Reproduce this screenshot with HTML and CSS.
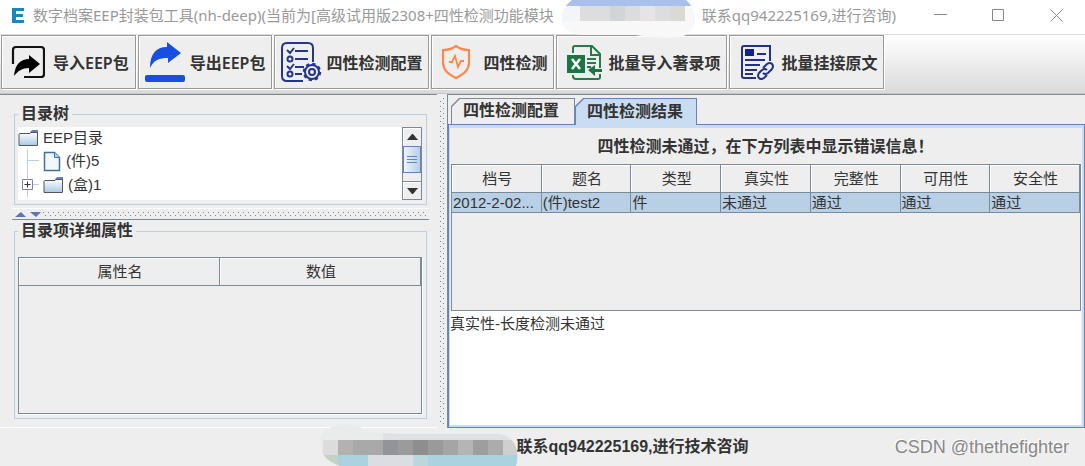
FILE: index.html
```html
<!DOCTYPE html>
<html lang="zh-CN">
<head>
  <meta charset="UTF-8">
  <meta name="viewport" content="width=device-width, initial-scale=1.0">
  <title>数字档案EEP封装包工具</title>
  <link rel="stylesheet" href="styles.css">
</head>
<body>
  <!-- 标题栏 -->
  <header class="titlebar">
    <svg class="app-icon" width="12" height="15" viewBox="0 0 12 15"><path d="M0 0h12v3H4v3h7v3H4v3h8v3H0z" fill="#1c86bd"/></svg>
    <span>数字档案EEP封装包工具(nh-deep)(当前为[高级试用版2308+四性检测功能模块</span>
    <svg class="title-mask" width="136" height="38" viewBox="0 0 136 38">
      <clipPath id="mask-top"><path d="M12 0h114c14 12 12 33-6 37-18 2-32 0-44-2H22C0 33-6 14 12 0z"/></clipPath>
      <g clip-path="url(#mask-top)">
        <rect width="136" height="38" fill="#f8f8f9"/>
        <rect width="136" height="6" fill="#a9c0ea"/>
        <rect y="6" width="20" height="15" fill="#f4f5f9"/>
        <rect x="20" y="6" width="30" height="15" fill="#dedddd"/>
        <rect x="50" y="6" width="15" height="15" fill="#d2d4d8"/>
        <rect x="65" y="6" width="15" height="15" fill="#dddcdd"/>
        <rect x="80" y="6" width="15" height="15" fill="#e6e4e4"/>
        <rect x="95" y="6" width="15" height="15" fill="#dddddd"/>
        <rect x="110" y="6" width="15" height="15" fill="#dbd9d6"/>
      </g>
    </svg>
    <span>联系qq942225169,进行咨询)</span>
    <div class="window-buttons">
      <button aria-label="最小化"><svg width="13" height="13" viewBox="0 0 13 13"><path d="M0 5.500h13"/></svg></button>
      <button aria-label="最大化"><svg width="13" height="13" viewBox="0 0 13 13"><path d="M.5.5h11v11H.5z"/></svg></button>
      <button aria-label="关闭"><svg width="13" height="13" viewBox="0 0 13 13"><path d="M.5.5l12 12M12.500.5l-12 12"/></svg></button>
    </div>
  </header>

  <!-- 工具栏 -->
  <nav class="toolbar">
    <button>
      <svg width="34" height="34" viewBox="0 0 34 34"><path d="M2 19V5q0-3 3-3h25q3 0 3 3v24q0 3-3 3H13" fill="none" stroke="#111" stroke-width="2.200"/><path d="M3 31C4 19 10 14 18 14v-4l11 9-11 9v-5C11 23 7 26 3 31z" fill="#000"/></svg>
      导入EEP包
    </button>
    <button>
      <svg width="42" height="42" viewBox="0 0 42 42"><path d="M6 27C6 13 12 6 23 6V1l14 11-13 10v-5c-9 0-14 2-18 10z" fill="#1a4ee0"/><rect x="1" y="34" width="40" height="7" rx="2" fill="#1a4ee0"/></svg>
      导出EEP包
    </button>
    <button>
      <svg width="42" height="42" viewBox="0 0 42 42" fill="none" stroke="#26358c" stroke-width="2"><path d="M23 40H7q-5 0-5-5V7q0-5 5-5h21q5 0 5 5v14" /><path d="M15 10h13M15 18h13M15 26h9M15 33h7M7 9l3 3 4-5M7 25l3 3 4-5"/><circle cx="10" cy="18" r="2.500"/><circle cx="10" cy="33" r="2.500"/><circle cx="32" cy="31" r="7" fill="#eee"/><circle cx="32" cy="31" r="8" stroke-width="2.500" stroke-dasharray="3.200 3.083"/><circle cx="32" cy="31" r="3"/></svg>
      四性检测配置
    </button>
    <button>
      <svg width="34" height="36" viewBox="6 0 34 36" fill="none" stroke="#ff8747" stroke-width="2.200"><path d="M21 2c4 3 8 4 13 4v12c0 8-5 12-13 16C13 30 8 26 8 18V6c5 0 9-1 13-4z"/><path d="M14 18h3l3-6 3 11 3-6h3" stroke-width="1.800"/></svg>
      四性检测
    </button>
    <button>
      <svg width="36" height="36" viewBox="0 0 36 36"><path d="M7 9V4q0-2 2-2h17l8 8v14M7 31v1q0 3 3 3h22q2 0 2-2v-3M25 2v9h9M21 15h9M21 19h9M21 23h4" fill="none" stroke="#237c4a" stroke-width="2"/><path d="M1 11h18v18H1z" fill="#1d7544"/><path d="M6 15l8 10M14 15L6 25" stroke="#fff" stroke-width="2.500"/><path d="M22 26l7-5v4h7v3h-7v4z" fill="#1d7544"/></svg>
      批量导入著录项
    </button>
    <button>
      <svg width="36" height="36" viewBox="0 0 36 36" fill="none" stroke="#22308c" stroke-width="2"><path d="M17 34H5q-2 0-2-2V4q0-2 2-2h26v15"/><path d="M6 5h9v7H6z" fill="#14218a" stroke="none"/><path d="M18 10h9M6 16h20M6 21h15M6 26h12M6 30h8"/><path d="M24 24l4-4q3-2 5 0t0 5l-4 4q-3 2-5 0M28 26q-2-2-5 0l-3 3q-2 3 0 5t5 0l3-3"/></svg>
      批量挂接原文
    </button>
  </nav>

  <main>
    <section class="left">
      <fieldset class="tree-box">
        <legend>目录树</legend>
        <div class="tree-row">
          <ul class="tree">
            <li>
              <svg width="21" height="17" viewBox="0 0 21 17"><use href="#folder"/></svg>EEP目录
            </li>
            <li class="child">
              <svg class="branch" width="23" height="24" viewBox="0 0 23 24"><path d="M9.500 0v24M10 11.500h11"/></svg>
              <svg class="doc" width="18" height="21" viewBox="0 0 18 21"><path d="M1.500 1.500h10l5 5v13h-15z" fill="#f2f7fc" stroke="#3f6fa5" stroke-width="1.500"/><path d="M11.500 1.500v5h5" fill="#b8cfe5" stroke="#3f6fa5"/></svg>(件)5
            </li>
            <li class="child">
              <svg class="branch" width="23" height="24" viewBox="0 0 23 24"><path d="M9.500 0v24M10 11.500h11"/><path class="handle" d="M4.500 6.500h10v10h-10z"/><path class="plus" d="M6.500 11.500h6M9.500 8.500v6"/></svg>
              <svg width="21" height="17" viewBox="0 0 21 17"><g id="folder"><path d="M12 2l2-2h6v3h-8z" fill="#6382bf"/><path d="M1 4.500q0-1 1-1h10l1-1h6.500v13H1z" fill="url(#folder-fill)" stroke="#555"/></g><linearGradient id="folder-fill" x2="0" y2="1"><stop stop-color="#fff"/><stop offset="1" stop-color="#a9c8e4"/></linearGradient></svg>(盒)1
            </li>
          </ul>
          <div class="scrollbar">
            <button aria-label="向上"><svg width="11" height="6" viewBox="0 0 11 6"><path d="M0 6l5-6h1l5 6z"/></svg></button>
            <div class="thumb"></div>
            <div class="track"></div>
            <button aria-label="向下"><svg width="11" height="6" viewBox="0 0 11 6"><path d="M0 0l5 6h1l5-6z"/></svg></button>
          </div>
        </div>
      </fieldset>

      <div class="splitter-h">
        <svg width="28" height="5" viewBox="0 0 28 5" fill="#5676b5"><path d="M0 5l6-5 5 5zM15 0h11l-5 5z"/></svg>
      </div>

      <fieldset class="detail-box">
        <legend>目录项详细属性</legend>
        <div class="table-wrap">
          <table>
            <thead><tr><th>属性名</th><th>数值</th></tr></thead>
          </table>
        </div>
      </fieldset>
    </section>

    <div class="splitter-v"></div>

    <section class="right">
      <div class="tabs">
        <button class="tab">四性检测配置</button>
        <button class="tab active">四性检测结果</button>
      </div>
      <div class="panel">
        <p class="message">四性检测未通过，在下方列表中显示错误信息！</p>
        <div class="table-wrap result">
          <table>
            <thead>
              <tr><th>档号</th><th>题名</th><th>类型</th><th>真实性</th><th>完整性</th><th>可用性</th><th>安全性</th></tr>
            </thead>
            <tbody>
              <tr><td>2012-2-02...</td><td>(件)test2</td><td>件</td><td>未通过</td><td>通过</td><td>通过</td><td>通过</td></tr>
            </tbody>
          </table>
        </div>
        <textarea aria-label="错误信息">真实性-长度检测未通过</textarea>
      </div>
    </section>
  </main>

  <!-- 底部 -->
  <footer>
    <div class="contact">
      <svg class="contact-mask" width="200" height="42" viewBox="0 0 200 42">
        <clipPath id="mask-bottom"><path d="M6 8C14-2 40-1 50 7c20 4 40 3 60 3h70c18 2 22 18 18 32H22C4 36-4 20 6 8z"/></clipPath>
        <g clip-path="url(#mask-bottom)">
          <rect width="200" height="42" fill="#eaebeb"/>
          <rect x="65" y="8" width="135" height="9" fill="#dfe1e3"/>
          <rect x="5" y="16" width="15" height="15" fill="#dcdcdc"/>
          <rect x="20" y="16" width="15" height="15" fill="#b3b1b1"/>
          <rect x="35" y="16" width="30" height="15" fill="#a9a9a9"/>
          <rect x="65" y="16" width="15" height="15" fill="#929499"/>
          <rect x="80" y="16" width="15" height="15" fill="#9b9b9b"/>
          <rect x="95" y="16" width="15" height="15" fill="#8e8e8e"/>
          <rect x="110" y="16" width="15" height="15" fill="#9a9a9a"/>
          <rect x="125" y="16" width="15" height="15" fill="#a5a5a5"/>
          <rect x="140" y="16" width="15" height="15" fill="#b5b5b5"/>
          <rect x="155" y="16" width="15" height="15" fill="#9e9e9e"/>
          <rect x="170" y="16" width="15" height="15" fill="#acacac"/>
          <rect x="185" y="16" width="15" height="15" fill="#cfcfd0"/>
          <rect y="31" width="20" height="11" fill="#c3d2c4"/>
          <rect x="20" y="31" width="30" height="11" fill="#a9d3de"/>
          <rect x="50" y="31" width="45" height="11" fill="#dcdde2"/>
          <rect x="95" y="31" width="15" height="11" fill="#bcd6de"/>
          <rect x="110" y="31" width="90" height="11" fill="#a9d3de"/>
        </g>
      </svg>
      <span>联系qq942225169,进行技术咨询</span>
    </div>
    <span class="watermark">CSDN @thethefighter</span>
  </footer>
</body>
</html>
```
FILE: styles.css
```css
* {
  box-sizing: border-box;
}
body {
  margin: 0;
  height: 100vh;
  display: flex;
  flex-direction: column;
  background-color: #eee;
  color: #333;
  font-family: "Liberation Sans", "Noto Sans CJK SC", sans-serif;
  font-size: 15px;
  overflow: hidden;
}
button {
  font: inherit;
  color: inherit;
  padding: 0;
  border: none;
  background: none;
}

/* 标题栏 */
.titlebar {
  display: flex;
  align-items: center;
  height: 34px;
  padding-left: 12px;
  background-color: #fff;
  color: #999;
  font-family: "Noto Sans", "Noto Sans CJK SC", sans-serif;
  line-height: 28px;
  white-space: nowrap;
}
.titlebar > span {
  height: 32px;
}
.app-icon {
  margin: 0 9px 4px 0;
}
.title-mask {
  position: relative;
  flex: none;
  align-self: flex-start;
  margin: 0 6px;
}
.window-buttons {
  display: flex;
  margin: 0 0 4px auto;
  height: 30px;
}
.window-buttons button {
  display: flex;
  align-items: center;
  justify-content: center;
  width: 58px;
}
.window-buttons path {
  fill: none;
  stroke: #888;
}

/* 工具栏 */
.toolbar {
  display: flex;
  gap: 2px;
  height: 60px;
  padding: 0 1px 4px;
  border-top: 1px solid #ddd;
  border-bottom: 1px solid #c8c8c8;
  background: linear-gradient(#fff, #dadada);
}
.toolbar button {
  display: flex;
  align-items: center;
  gap: 8px;
  height: 54px;
  padding: 0 6px 0 9px;
  border: 1px solid #999;
  box-shadow: inset 1px 1px #fff, 1px 1px #fff;
  background-color: #eee;
  font-family: "Noto Sans", "Noto Sans CJK SC", sans-serif;
  font-size: 16px;
  font-weight: 600;
  white-space: nowrap;
}
.toolbar button:nth-child(2),
.toolbar button:nth-child(3) {
  padding: 0 6px 0 5px;
  gap: 4px;
}
.toolbar button:nth-child(n+5) {
  gap: 6px;
}

/* 主体 */
main {
  flex: 1;
  display: flex;
  min-height: 0;
}
.left {
  display: flex;
  flex-direction: column;
  width: 437px;
  padding: 8px 8px 8px 12px;
  border-top: 1px solid #7a8a99;
  border-bottom: 1px solid #fff;
}
fieldset {
  display: flex;
  flex-direction: column;
  min-width: 0;
  margin: 0 2px;
  padding: 2px 4px 4px 3px;
  border: 1px solid #b8cfe5;
}
legend {
  padding: 0 3px;
  font-size: 16px;
  font-weight: bold;
  line-height: 22px;
}
.tree-row {
  display: flex;
  height: 73px;
}
.tree {
  flex: 1;
  margin: 0;
  padding: 0;
  overflow: hidden;
  background-color: #fff;
  list-style: none;
}
.tree li {
  display: flex;
  align-items: center;
  gap: 4px;
  height: 24px;
  line-height: 18px;
}
.tree li:first-child {
  height: 22px;
}
.tree .child svg + svg {
  margin-left: -2px;
}
.tree .doc {
  margin-right: 1px;
}
.branch path {
  fill: none;
  stroke: #b8cfe5;
}
.branch .handle {
  fill: #fff;
  stroke: #7a8a99;
}
.branch .plus {
  stroke: #333;
}
.scrollbar {
  display: flex;
  flex-direction: column;
  width: 20px;
  border: 1px solid #7a8a99;
}
.scrollbar button {
  display: flex;
  align-items: center;
  justify-content: center;
  height: 18px;
  box-shadow: inset 1px 1px #fff;
}
.scrollbar button:last-child {
  border-top: 1px solid #7a8a99;
}
.scrollbar path {
  fill: #333;
}
.thumb {
  height: 27px;
  padding: 9px 3px;
  border: 1px solid #6382bf;
  background: repeating-linear-gradient(#6382bf 0 1px, transparent 1px 3px) content-box, linear-gradient(90deg, #eef4fa, #b8cfe5);
}
.track {
  flex: 1;
}

/* 分隔条 */
.splitter-h {
  height: 12px;
  padding: 3px 3px 2px;
  margin-top: 3px;
  border-top: 1px solid #fff;
  border-bottom: 1px solid #7a8a99;
  line-height: 0;
}
.splitter-h,
.splitter-v {
  background-image: conic-gradient(from 270deg at 1px 1px, #7a8a99 90deg, transparent 0), conic-gradient(from 270deg at 1px 1px, #7a8a99 90deg, transparent 0);
  background-position: 0 3px, 3px 0;
  background-size: 5px 5px;
  background-clip: content-box;
  background-origin: content-box;
}
.splitter-h svg {
  background-color: #eee;
}
.splitter-v {
  width: 10px;
  padding: 4px 3px;
}

.detail-box {
  flex: 1;
  padding-top: 15px;
}
.table-wrap {
  flex: 1;
  border: 1px solid #7a8a99;
  box-shadow: 1px 1px #fff;
}
table {
  width: 100%;
  table-layout: fixed;
  border-collapse: separate;
  border-spacing: 0;
}
th,
td {
  padding: 0;
  border-right: 1px solid #7a8a99;
  border-bottom: 1px solid #7a8a99;
  font-weight: normal;
  white-space: nowrap;
}
th {
  height: 28px;
  padding-left: 2px;
  line-height: 27px;
  box-shadow: inset 1px 1px #fff;
}
td {
  height: 20px;
  padding: 0 0 1px 1px;
  background-color: #b8cfe5;
  line-height: 17px;
}

/* 右侧 */
.right {
  flex: 1;
  display: flex;
  flex-direction: column;
  min-width: 0;
  padding-top: 3px;
  border-top: 1px solid #7a8a99;
  border-left: 1px solid #7a8a99;
}
.tabs {
  display: flex;
  padding-left: 3px;
}
.tab {
  position: relative;
  z-index: 0;
  height: 26px;
  padding: 0 16px 0 12px;
  background-color: #7a8a99;
  clip-path: polygon(0 8px, 8px 0, 100% 0, 100% 100%, 0 100%);
  font-size: 16px;
  font-weight: bold;
  line-height: 26px;
}
.tab::before {
  content: "";
  position: absolute;
  z-index: -1;
  inset: 1px 1px 0;
  background-color: #eee;
  clip-path: polygon(0 8px, 8px 0, 100% 0, 100% 100%, 0 100%);
}
.tab.active {
  height: 27px;
  margin-bottom: -1px;
  padding: 0 14px 0 12px;
  background-color: #6382bf;
}
.tab.active::before {
  background-color: #c8ddf2;
}
.panel {
  flex: 1;
  display: flex;
  flex-direction: column;
  border: 1px solid #6382bf;
  box-shadow: inset 0 3px #c8ddf2, inset -2px -2px #c8ddf2, inset 1px 0 #c8ddf2;
  padding: 4px 3px 2px 1px;
}
.message {
  margin: 0;
  font-size: 16px;
  font-weight: bold;
  line-height: 35px;
  text-align: center;
}
.result {
  flex: none;
  height: 147px;
  margin-left: 1px;
}
textarea {
  flex: 1;
  padding: 2px 0;
  border: none;
  outline: none;
  resize: none;
  background-color: #fff;
  color: #333;
  font: inherit;
  line-height: 22px;
}

/* 底部 */
footer {
  display: flex;
  align-items: center;
  justify-content: flex-end;
  position: relative;
  height: 38px;
  padding-right: 16px;
}
.contact {
  position: absolute;
  left: 0;
  right: 0;
  bottom: 0;
  display: flex;
  align-items: center;
  justify-content: center;
  padding-right: 18px;
  font-size: 16px;
  font-weight: bold;
}
.contact-mask {
  margin-right: -2px;
}
.watermark {
  color: #888;
  font-size: 18px;
  text-shadow: -1px -1px #fff;
}
```
